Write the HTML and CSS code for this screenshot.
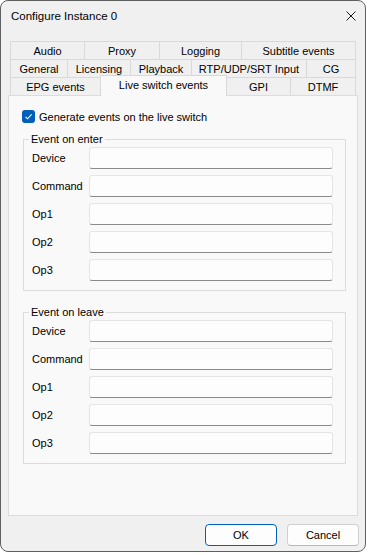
FILE: index.html
```html
<!DOCTYPE html>
<html lang="en">
<head>
  <meta charset="UTF-8">
  <meta name="viewport" content="width=device-width, initial-scale=1.0">
  <title>Configure Instance 0</title>
  <link rel="stylesheet" href="styles.css">
</head>
<body>
  <div class="window">
    <div class="titlebar">
      <span class="title">Configure Instance 0</span>
      <svg class="close-icon" width="10" height="10" viewBox="0 0 10 10">
        <path d="M0.5 0.5 L9.5 9.5 M9.5 0.5 L0.5 9.5" stroke="#1b1b1b" stroke-width="1" fill="none"/>
      </svg>
    </div>

    <div class="content">
      <div class="tabs">
        <div class="tab-row">
          <div class="tab tab-audio">Audio</div>
          <div class="tab tab-proxy">Proxy</div>
          <div class="tab tab-logging">Logging</div>
          <div class="tab tab-fill">Subtitle events</div>
        </div>
        <div class="tab-row">
          <div class="tab tab-general">General</div>
          <div class="tab tab-licensing">Licensing</div>
          <div class="tab tab-playback">Playback</div>
          <div class="tab tab-rtp">RTP/UDP/SRT Input</div>
          <div class="tab tab-fill">CG</div>
        </div>
        <div class="tab-row">
          <div class="tab tab-epg">EPG events</div>
          <div class="tab tab-live active">Live switch events</div>
          <div class="tab tab-gpi">GPI</div>
          <div class="tab tab-fill">DTMF</div>
        </div>
      </div>

      <div class="panel">
        <label class="check-row">
          <span class="check-box">
            <svg width="13" height="13" viewBox="0 0 13 13">
              <path d="M3.5 6.8 L5.5 8.8 L9.6 4.4" stroke="#fff" stroke-width="1.1" fill="none"/>
            </svg>
          </span>
          Generate events on the live switch
        </label>

        <fieldset class="group">
          <legend>Event on enter</legend>
          <div class="field-row"><span class="field-label">Device</span><input class="field-input" type="text"></div>
          <div class="field-row"><span class="field-label">Command</span><input class="field-input" type="text"></div>
          <div class="field-row"><span class="field-label">Op1</span><input class="field-input" type="text"></div>
          <div class="field-row"><span class="field-label">Op2</span><input class="field-input" type="text"></div>
          <div class="field-row"><span class="field-label">Op3</span><input class="field-input" type="text"></div>
        </fieldset>

        <fieldset class="group group-second">
          <legend>Event on leave</legend>
          <div class="field-row"><span class="field-label">Device</span><input class="field-input" type="text"></div>
          <div class="field-row"><span class="field-label">Command</span><input class="field-input" type="text"></div>
          <div class="field-row"><span class="field-label">Op1</span><input class="field-input" type="text"></div>
          <div class="field-row"><span class="field-label">Op2</span><input class="field-input" type="text"></div>
          <div class="field-row"><span class="field-label">Op3</span><input class="field-input" type="text"></div>
        </fieldset>
      </div>
    </div>

    <div class="footer">
      <button class="btn btn-default">OK</button>
      <button class="btn">Cancel</button>
    </div>
  </div>
</body>
</html>
```

FILE: styles.css
```css
body {
  margin: 0;
  background-color: #ffffff;
  font-family: "Liberation Sans", Arial, sans-serif;
  font-size: 11px;
  color: #000;
}
.window {
  width: 366px;
  height: 552px;
  box-sizing: border-box;
  border: 1px solid #5f5f5f;
  border-radius: 8px;
  background-color: #f0f0f0;
  display: flex;
  flex-direction: column;
  overflow: hidden;
}
.titlebar {
  height: 30px;
  display: flex;
  align-items: center;
  justify-content: space-between;
  padding: 0 9px 0 10px;
}
.title {
  font-size: 11.5px;
}
.content {
  padding: 10px 7px 0 7px;
}
.tabs {
  margin: 0 2px;
}
.tab-row {
  display: flex;
  height: 18px;
}
.tab {
  box-sizing: border-box;
  height: 18px;
  margin-left: -1px;
  border: 1px solid #d9d9d9;
  border-bottom: none;
  background-color: #f0f0f0;
  display: flex;
  align-items: center;
  justify-content: center;
  white-space: nowrap;
}
.tab:first-child {
  margin-left: 0;
}
.tab.active {
  height: 21px;
  margin-top: -2px;
  background-color: #f9f9f9;
  z-index: 1;
  padding-bottom: 3px;
}
.tab-fill { flex: 1; }
.tab-audio { width: 75px; }
.tab-proxy { width: 76px; }
.tab-logging { width: 83px; }
.tab-general { width: 58px; }
.tab-licensing { width: 64px; }
.tab-playback { width: 62px; }
.tab-rtp { width: 116px; }
.tab-epg { width: 91px; }
.tab-live { width: 127px; }
.tab-gpi { width: 65px; }

.panel {
  height: 421px;
  box-sizing: border-box;
  border: 1px solid #dcdcdc;
  background-color: #f9f9f9;
  padding: 14px 11px 0 13px;
}
.check-row {
  display: flex;
  align-items: center;
  gap: 4px;
  height: 13px;
}
.check-box {
  width: 13px;
  height: 13px;
  border-radius: 3px;
  background-color: #005fb8;
  display: flex;
}
.group {
  margin: 8px 0 0 1px;
  padding: 0 12px 9px 8px;
  border: 1px solid #dcdcdc;
  display: flex;
  flex-direction: column;
  gap: 6px;
}
.group legend {
  padding: 0 2px;
  margin-left: -3px;
  line-height: 16px;
}
.group-second {
  margin-top: 13px;
}
.field-row {
  display: flex;
  align-items: center;
  height: 22px;
}
.field-label {
  width: 57px;
  flex-shrink: 0;
}
.field-input {
  flex: 1;
  height: 22px;
  box-sizing: border-box;
  margin: 0;
  border: 1px solid #e5e5e5;
  border-bottom-color: #8a8a8a;
  border-radius: 3px;
  background-color: #fdfdfd;
  font: inherit;
}
.footer {
  display: flex;
  justify-content: flex-end;
  gap: 10px;
  padding: 8px 6px 0 0;
}
.btn {
  width: 72px;
  height: 22px;
  box-sizing: border-box;
  border: 1px solid #d0d0d0;
  border-bottom-color: #b8b8b8;
  border-radius: 4px;
  background-color: #fdfdfd;
  font: inherit;
  color: #000;
  padding: 0;
}
.btn-default {
  border-color: #005fb8;
}
```
